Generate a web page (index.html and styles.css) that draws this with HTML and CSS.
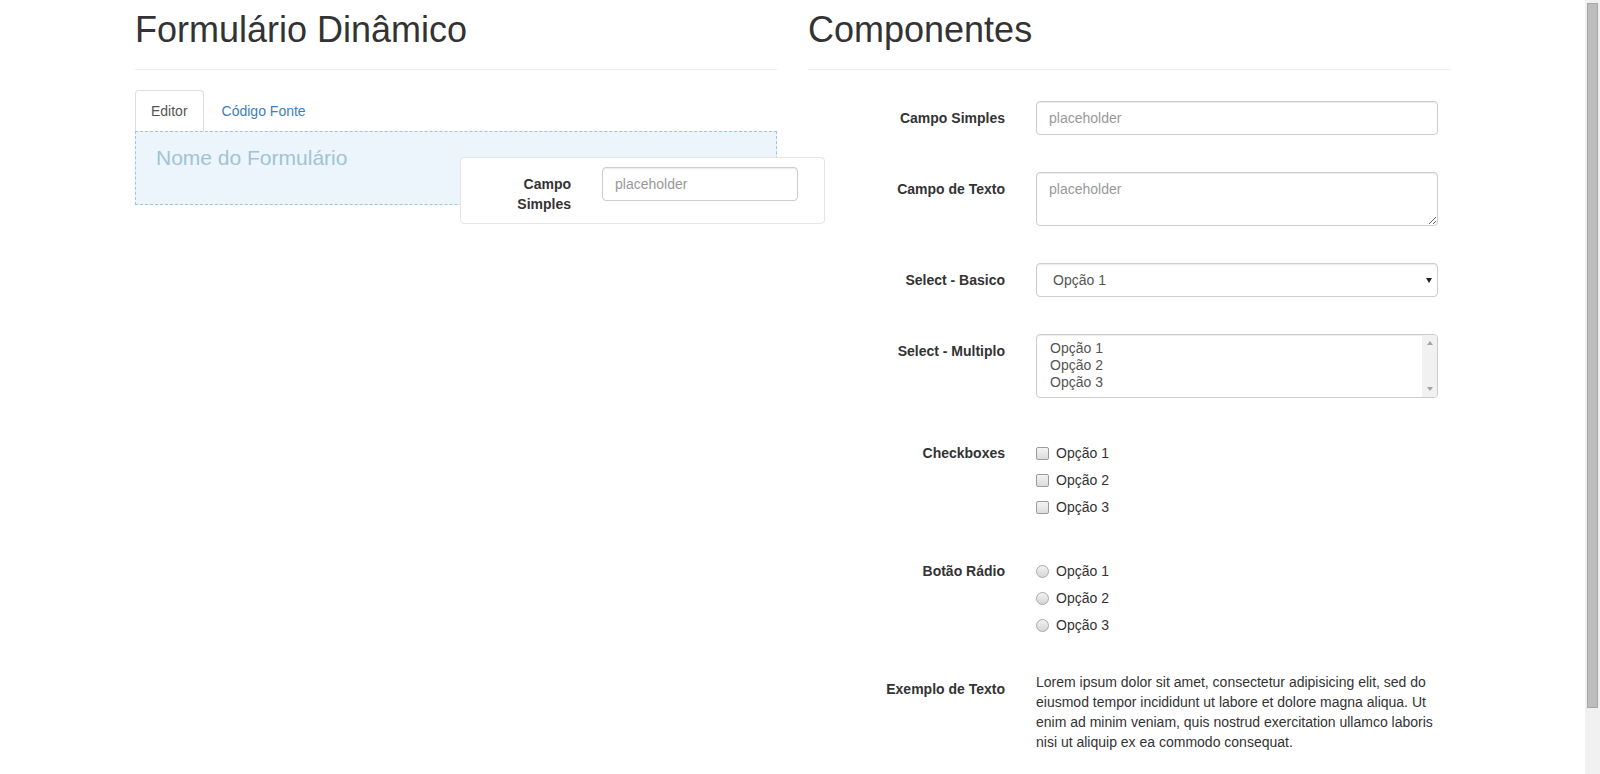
FILE: index.html
```html
<!DOCTYPE html>
<html lang="pt-BR">
<head>
<meta charset="utf-8">
<title>Formulário Dinâmico</title>
<link rel="stylesheet" href="styles.css">
</head>
<body>
<div class="window">
  <main class="page">
    <div class="columns">
      <section class="col">
        <div class="page-header"><h1>Formulário Dinâmico</h1></div>
        <ul class="tabs">
          <li class="tab active"><a href="#">Editor</a></li>
          <li class="tab"><a href="#">Código Fonte</a></li>
        </ul>
        <div class="dropzone">
          <div class="legend">Nome do Formulário</div>
          <div class="drag-card">
            <label class="flabel">Campo Simples</label>
            <input class="control" type="text" placeholder="placeholder">
          </div>
        </div>
      </section>
      <section class="col">
        <div class="page-header"><h1>Componentes</h1></div>
        <form class="components">
          <div class="group">
            <label class="flabel">Campo Simples</label>
            <input class="control" type="text" placeholder="placeholder">
          </div>
          <div class="group">
            <label class="flabel">Campo de Texto</label>
            <textarea class="control textarea" placeholder="placeholder"></textarea>
          </div>
          <div class="group">
            <label class="flabel">Select - Basico</label>
            <div class="select-wrap">
              <select class="control select">
                <option>Opção 1</option>
                <option>Opção 2</option>
                <option>Opção 3</option>
              </select>
            </div>
          </div>
          <div class="group">
            <label class="flabel">Select - Multiplo</label>
            <div class="listbox" role="listbox" aria-multiselectable="true">
              <div class="lb-options">
                <div class="lb-option" role="option">Opção 1</div>
                <div class="lb-option" role="option">Opção 2</div>
                <div class="lb-option" role="option">Opção 3</div>
              </div>
              <div class="lb-scroll">
                <span class="arrow-up"></span>
                <span class="arrow-down"></span>
              </div>
            </div>
          </div>
          <div class="group group-choices">
            <label class="flabel">Checkboxes</label>
            <div class="choices">
              <label class="choice"><input type="checkbox" class="cb">Opção 1</label>
              <label class="choice"><input type="checkbox" class="cb">Opção 2</label>
              <label class="choice"><input type="checkbox" class="cb">Opção 3</label>
            </div>
          </div>
          <div class="group">
            <label class="flabel">Botão Rádio</label>
            <div class="choices">
              <label class="choice"><input type="radio" name="r" class="rb">Opção 1</label>
              <label class="choice"><input type="radio" name="r" class="rb">Opção 2</label>
              <label class="choice"><input type="radio" name="r" class="rb">Opção 3</label>
            </div>
          </div>
          <div class="group">
            <label class="flabel">Exemplo de Texto</label>
            <p class="lorem">Lorem ipsum dolor sit amet, consectetur adipisicing elit, sed do eiusmod tempor incididunt ut labore et dolore magna aliqua. Ut enim ad minim veniam, quis nostrud exercitation ullamco laboris nisi ut aliquip ex ea commodo consequat.</p>
          </div>
        </form>
      </section>
    </div>
  </main>
  <div class="vscroll"><div class="thumb"></div></div>
</div>
</body>
</html>
```

FILE: styles.css
```css
* { box-sizing: border-box; }
html, body { margin: 0; padding: 0; }
body {
  font-family: "Liberation Sans", Arial, Helvetica, sans-serif;
  font-size: 14px;
  line-height: 20px;
  color: #333;
  background: #fff;
}
.window {
  display: flex;
  height: 774px;
  overflow: hidden;
}
.page {
  flex: 1;
  overflow: hidden;
  padding: 0 134px 0 135px;
}
.columns {
  display: grid;
  grid-template-columns: 642px 643px;
  column-gap: 31px;
}
.page-header {
  padding-top: 10px;
  padding-bottom: 9px;
  border-bottom: 1px solid #eee;
}
.page-header h1 {
  margin: 0 0 10px;
  font-size: 36px;
  line-height: 40px;
  font-weight: 500;
  color: #333;
}
.tabs {
  list-style: none;
  margin: 20px 0 0;
  padding: 0;
  display: flex;
}
.tab { margin-right: 2px; }
.tab a {
  display: block;
  padding: 10px 15px;
  line-height: 20px;
  border: 1px solid transparent;
  border-bottom: 0;
  border-radius: 4px 4px 0 0;
  color: #3a80c0;
  text-decoration: none;
}
.tab.active a {
  color: #555;
  background: #fff;
  border-color: #ddd;
}
.dropzone {
  position: relative;
  height: 74px;
  border: 1px dashed #9dc6dc;
  background: #ecf5fb;
  padding: 11px 20px;
}
.legend {
  font-size: 21px;
  line-height: 30px;
  color: #9fc4d6;
}
.drag-card {
  position: absolute;
  left: 324px;
  top: 25px;
  width: 365px;
  height: 67px;
  background: #fff;
  border: 1px solid #e5e5e5;
  border-radius: 4px;
  padding: 9px 26px 9px 16px;
  display: grid;
  grid-template-columns: 94px 1fr;
  column-gap: 31px;
  align-items: start;
}
.flabel {
  display: block;
  padding-top: 7px;
  text-align: right;
  font-weight: bold;
  line-height: 20px;
  color: #333;
}
.control {
  display: block;
  width: 100%;
  height: 34px;
  padding: 6px 12px;
  font-family: inherit;
  font-size: 14px;
  line-height: 20px;
  color: #555;
  background: #fff;
  border: 1px solid #ccc;
  border-radius: 4px;
  box-shadow: inset 0 1px 1px rgba(0,0,0,.075);
  outline: none;
}
.control::placeholder { color: #999; }
.textarea {
  height: 54px;
  resize: vertical;
}
.components { margin-top: 31px; }
.group {
  display: grid;
  grid-template-columns: 197px 402px;
  column-gap: 31px;
  align-items: start;
  margin-bottom: 37px;
}
.group-choices { margin-top: 38px; }
.select-wrap { position: relative; }
.select {
  -webkit-appearance: none;
  appearance: none;
  padding-left: 16px;
}
.select-wrap::after {
  content: "";
  position: absolute;
  right: 6px;
  top: 15px;
  border-style: solid;
  border-width: 5px 3px 0;
  border-color: #222 transparent transparent;
}
.listbox {
  display: flex;
  height: 64px;
  border: 1px solid #ccc;
  border-radius: 4px;
  box-shadow: inset 0 1px 1px rgba(0,0,0,.075);
  overflow: hidden;
  color: #555;
}
.lb-options {
  flex: 1;
  padding: 5px 13px;
}
.lb-option { line-height: 17px; }
.lb-scroll {
  width: 15px;
  background: #f1f1f1;
  display: flex;
  flex-direction: column;
  justify-content: space-between;
  align-items: center;
  padding: 6px 0;
}
.arrow-up, .arrow-down {
  display: block;
  width: 0;
  height: 0;
  border-style: solid;
}
.arrow-up {
  border-width: 0 3.5px 4px;
  border-color: transparent transparent #a3a3a3;
}
.arrow-down {
  border-width: 4px 3.5px 0;
  border-color: #a3a3a3 transparent transparent;
}
.choices { display: flex; flex-direction: column; }
.choice {
  display: flex;
  align-items: center;
  padding-top: 7px;
  line-height: 20px;
  color: #333;
}
.cb, .rb {
  -webkit-appearance: none;
  appearance: none;
  width: 13px;
  height: 13px;
  margin: 0 7px 0 0;
  flex: none;
}
.cb {
  border: 1px solid #9c9c9c;
  border-radius: 2px;
  background: linear-gradient(#f3f3f3, #dcdcdc);
}
.rb {
  border: 1px solid #a9a9a9;
  border-radius: 50%;
  background: linear-gradient(#f2f2f2, #d6d6d6);
}
.lorem {
  margin: 0;
  line-height: 20px;
  color: #333;
}
.vscroll {
  width: 15px;
  flex: none;
  background: #f1f1f1;
  padding: 3px 2px 0;
}
.thumb {
  height: 705px;
  background: #bdbdbd;
  border: 1px solid #a6a6a6;
}
```
